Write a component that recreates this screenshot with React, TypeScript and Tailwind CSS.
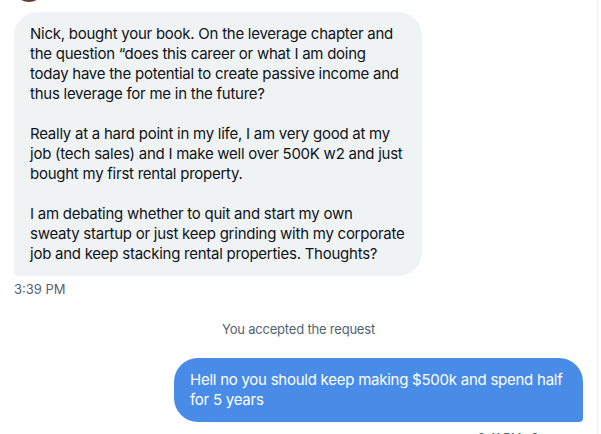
export default function App() {
  return (
    <div className="flex h-[434px] w-[601px] overflow-hidden bg-white font-['Inter','Liberation_Sans',sans-serif]">
      <div className="flex w-[598px] flex-col border-r border-[#eff3f4] px-[14px]">
        {/* incoming message */}
        <div className="-mt-[30px] ml-[-1px] h-[32px] w-[32px] shrink-0 rounded-full bg-[#5a4636]" />
        <div className="mt-[10px] w-[408px] rounded-[24px] rounded-bl-[4px] bg-[#eff3f4] px-4 py-3 text-[15px] leading-5 tracking-[-0.25px] text-[#0f1419]">
          <p>
            Nick, bought your book. On the leverage chapter and
            <br />
            the question “does this career or what I am doing
            <br />
            today have the potential to create passive income and
            <br />
            thus leverage for me in the future?
          </p>
          <p className="mt-5">
            Really at a hard point in my life, I am very good at my
            <br />
            job (tech sales) and I make well over 500K w2 and just
            <br />
            bought my first rental property.
          </p>
          <p className="mt-5">
            I am debating whether to quit and start my own
            <br />
            sweaty startup or just keep grinding with my corporate
            <br />
            job and keep stacking rental properties. Thoughts?
          </p>
        </div>
        <div className="mt-[5px] text-[13px] leading-4 text-[#536471]">3:39 PM</div>

        {/* system note */}
        <div className="mt-6 text-center text-[13px] leading-4 tracking-[-0.2px] text-[#536471]">
          You accepted the request
        </div>

        {/* outgoing message */}
        <div className="ml-auto mt-[21px] w-[409px] rounded-[24px] rounded-br-[4px] bg-[#498ce8] px-4 py-3 text-[15px] leading-5 tracking-[-0.25px] text-white">
          Hell no you should keep making $500k and spend half
          <br />
          for 5 years
        </div>
        <div className="mr-[24px] mt-[8px] text-right text-[12px] leading-4 tracking-[-0.2px] text-[#536471]">
          3:41 PM · Seen
        </div>
      </div>
    </div>
  );
}
